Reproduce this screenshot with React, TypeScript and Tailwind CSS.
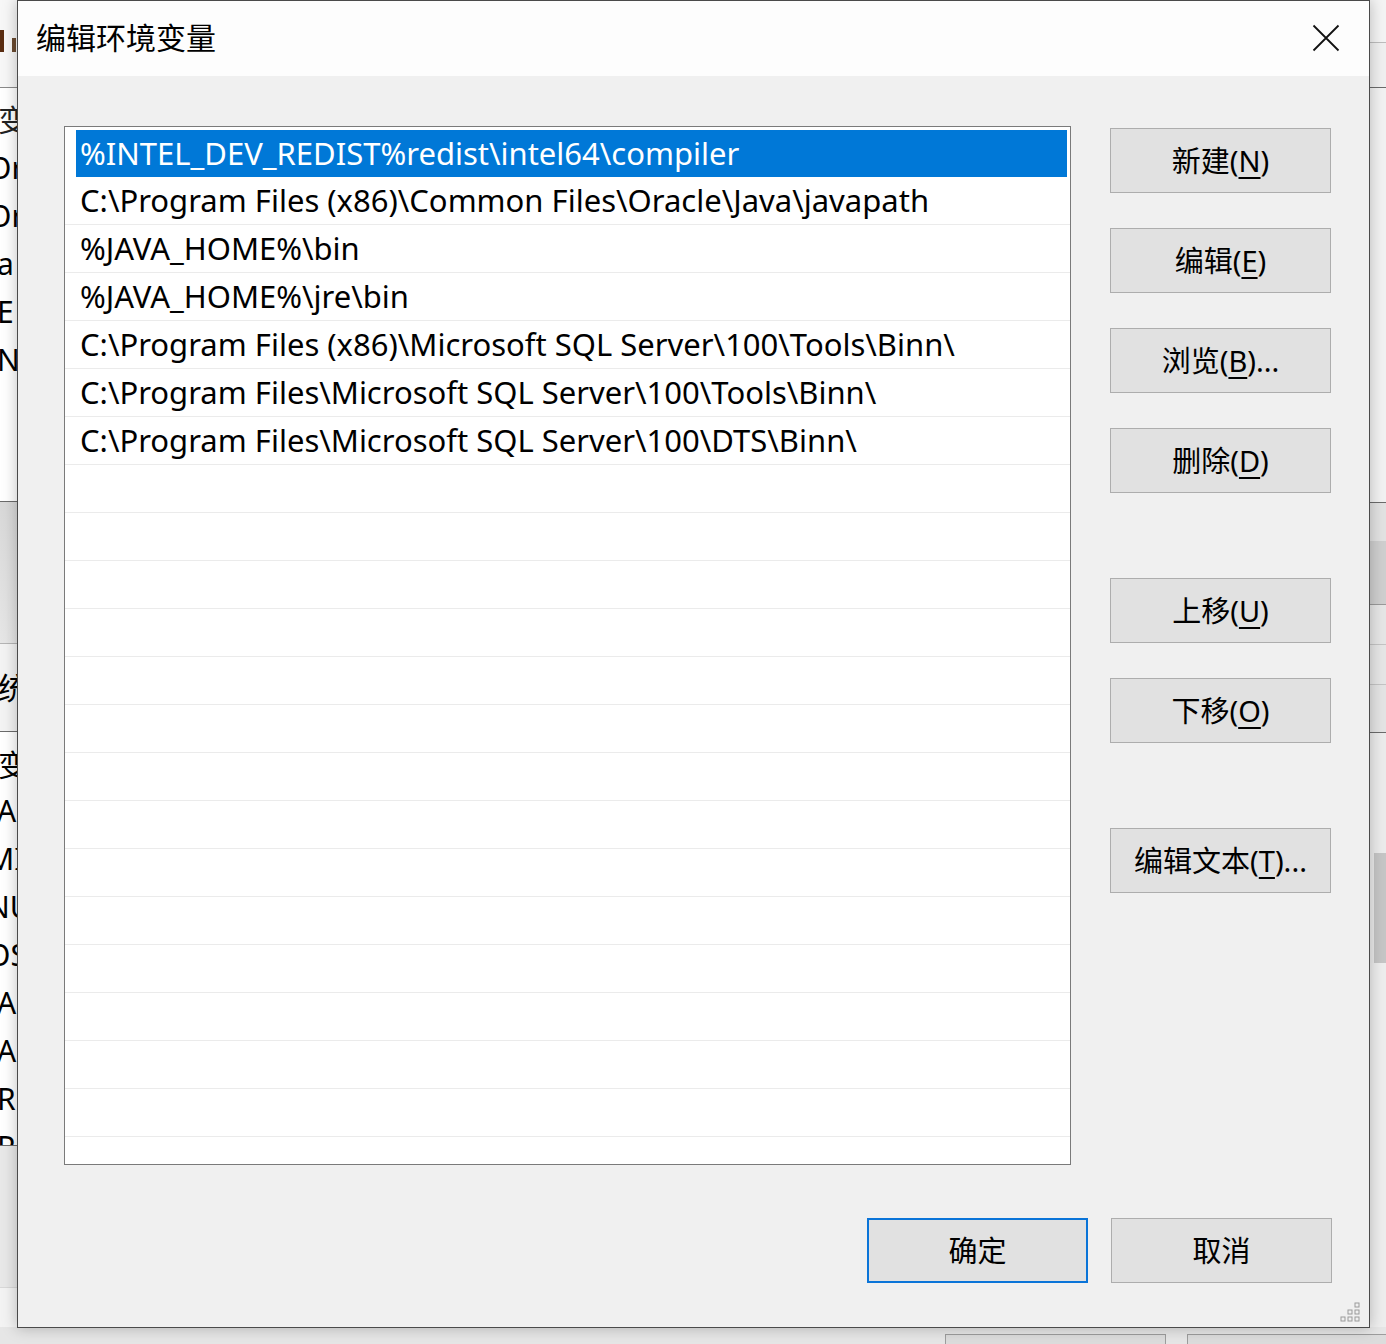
import React from "react";

const paths = [
  "%INTEL_DEV_REDIST%redist\\intel64\\compiler",
  "C:\\Program Files (x86)\\Common Files\\Oracle\\Java\\javapath",
  "%JAVA_HOME%\\bin",
  "%JAVA_HOME%\\jre\\bin",
  "C:\\Program Files (x86)\\Microsoft SQL Server\\100\\Tools\\Binn\\",
  "C:\\Program Files\\Microsoft SQL Server\\100\\Tools\\Binn\\",
  "C:\\Program Files\\Microsoft SQL Server\\100\\DTS\\Binn\\",
];

const rows = Array.from({ length: 22 }, (_, i) => paths[i] ?? "");

function Btn({
  label,
  mn,
  tail = "",
  primary = false,
}: {
  label: string;
  mn?: string;
  tail?: string;
  primary?: boolean;
}) {
  return (
    <div
      className={
        "w-[221px] h-[65px] flex items-center justify-center bg-[#e1e1e1] text-[29px] text-black " +
        (primary ? "border-2 border-[#0a74d8]" : "border border-[#adadad]")
      }
    >
      <span>
        {label}
        {mn ? (
          <>
            (<span className="underline underline-offset-[5px] decoration-[1.5px]">{mn}</span>)
          </>
        ) : null}
        {tail}
      </span>
    </div>
  );
}

export default function App() {
  const font = { fontFamily: '"Noto Sans", "Noto Sans CJK SC", sans-serif' };
  return (
    <div
      className="relative w-[1386px] h-[1344px] overflow-hidden bg-[#ececec]"
      style={font}
    >
      {/* background window - left edge */}
      <div className="absolute left-0 top-0 w-[40px] h-[1344px] bg-[#f3f3f3] overflow-hidden text-[30px] leading-none text-black flex flex-col">
        <div className="h-[88px] shrink-0 border-b border-[#8a8a8a] relative bg-[#f7f7f7]">
          <div className="absolute left-0 top-[30px] w-[4px] h-[22px] bg-[#5a2d12]" />
          <div className="absolute left-[12px] top-[38px] w-[4px] h-[14px] bg-[#6a4a30]" />
        </div>
        <div className="h-[414px] shrink-0 overflow-hidden border-b border-[#6b6b6b] bg-white flex flex-col">
          <div className="h-[56px] shrink-0 flex items-center pt-[8px] -ml-[2px] text-[#222]">变</div>
          {["Or", "Or", "a", "E", "N"].map((t, i) => (
            <div key={i} className={"h-[48px] shrink-0 flex items-center " + (t.length > 1 ? "-ml-[12px]" : "-ml-[3px]")}>
              {t}
            </div>
          ))}
        </div>
        <div className="h-[142px] shrink-0 bg-gradient-to-b from-[#d8d8d8] to-[#e6e6e6] border-b border-[#b5b5b5]" />
        <div className="h-[88px] shrink-0 flex items-center -ml-[2px] border-b border-[#6b6b6b]">统</div>
        <div className="bg-white flex flex-col h-[414px] shrink-0 overflow-hidden border-b border-[#6b6b6b]">
          <div className="h-[55px] shrink-0 flex items-center pt-[10px] -ml-[2px]">变</div>
          {["A", "MI", "NU", "OS", "A", "A", "R", "P"].map((t, i) => (
            <div key={i} className={"h-[48px] shrink-0 flex items-center " + (t.length > 1 ? "-ml-[13px]" : "-ml-[3px]")}>
              {t}
            </div>
          ))}
        </div>
        <div className="h-[142px] shrink-0 bg-[#e8e8e8] border-b border-[#d8d8d8]" />
      </div>

      {/* background window - right edge */}
      <div className="absolute left-[1369px] top-0 w-[17px] h-[1344px] bg-[#f0f0f0] flex flex-col">
        <div className="h-[43px] border-b border-[#bdbdbd] bg-[#f4f4f4]" />
        <div className="h-[45px] border-b border-[#6b6b6b] bg-[#f0f0f0]" />
        <div className="h-[415px] border-b border-[#6b6b6b] bg-[#f2f2f2]" />
        <div className="h-[38px] bg-[#e2e2e2]" />
        <div className="h-[64px] bg-[#cfcfcf] border-b border-[#9a9a9a]" />
        <div className="h-[40px] bg-[#e6e6e6] border-b border-[#c4c4c4]" />
        <div className="h-[40px] bg-[#e6e6e6] border-b border-[#c4c4c4]" />
        <div className="h-[48px] bg-[#e4e4e4] border-b border-[#6b6b6b]" />
        <div className="h-[120px] bg-[#ececec]" />
        <div className="h-[110px] flex justify-end bg-[#ececec]">
          <div className="w-[12px] h-full bg-[#c6c6c6]" />
        </div>
        <div className="flex-1 bg-[#eeeeee]" />
      </div>

      {/* background window - bottom edge */}
      <div className="absolute left-0 top-[1327px] w-[1386px] h-[17px] bg-[#e6e6e6] flex pt-[7px]">
        <div className="w-[945px]" />
        <div className="w-[221px] h-full bg-[#dcdcdc] border-t border-l border-r border-[#9d9d9d]" />
        <div className="w-[21px]" />
        <div className="flex-1 h-full bg-[#dcdcdc] border-t border-l border-[#9d9d9d]" />
      </div>

      {/* dialog */}
      <div className="absolute left-[17px] top-0 w-[1353px] h-[1328px] border border-[#4a4a4a] bg-[#f0f0f0] flex flex-col shadow-[0_0_14px_rgba(0,0,0,0.25)]">
        {/* title bar */}
        <div className="h-[75px] bg-[#fdfdfd] flex items-center justify-between pl-[18px] pr-[29px]">
          <div className="text-[30px] text-black leading-none -mt-[2px]">编辑环境变量</div>
          <svg width="28" height="28" viewBox="0 0 28 28" className="-mt-[2px]">
            <path d="M1.5 1.5 L26.5 26.5 M26.5 1.5 L1.5 26.5" stroke="#111" strokeWidth="1.8" fill="none" />
          </svg>
        </div>

        {/* body */}
        <div className="flex-1 flex flex-col pl-[46px] pr-[37px] pt-[50px]">
          <div className="flex gap-[39px]">
            {/* list */}
            <div className="w-[1007px] h-[1039px] border border-[#7a7a7a] bg-white pt-[2px] overflow-hidden">
              {rows.map((r, i) =>
                i === 0 ? (
                  <div key={i} className="h-[48px] pl-[11px] pr-[3px] pt-[1px]">
                    <div className="h-[47px] bg-[#0078d7] text-white text-[31px] leading-none flex items-center pl-[4px] whitespace-nowrap">
                      {r}
                    </div>
                  </div>
                ) : (
                  <div
                    key={i}
                    className="h-[48px] border-b border-[#ebebeb] text-[31px] leading-none text-black flex items-center pl-[15px] whitespace-nowrap"
                  >
                    {r}
                  </div>
                )
              )}
            </div>

            {/* right buttons */}
            <div className="flex flex-col pt-[2px]">
              <Btn label="新建" mn="N" />
              <div className="h-[35px]" />
              <Btn label="编辑" mn="E" />
              <div className="h-[35px]" />
              <Btn label="浏览" mn="B" tail="..." />
              <div className="h-[35px]" />
              <Btn label="删除" mn="D" />
              <div className="h-[85px]" />
              <Btn label="上移" mn="U" />
              <div className="h-[35px]" />
              <Btn label="下移" mn="O" />
              <div className="h-[85px]" />
              <Btn label="编辑文本" mn="T" tail="..." />
            </div>
          </div>

          {/* bottom buttons */}
          <div className="flex justify-end gap-[23px] mt-[53px]">
            <Btn label="确定" primary />
            <Btn label="取消" />
          </div>

          {/* resize grip */}
          <div className="flex-1 flex justify-end items-end -mr-[30px] pb-[3px]">
            <svg width="24" height="22" viewBox="0 0 24 22">
              {[
                [17, 1],
                [10, 8],
                [17, 8],
                [3, 15],
                [10, 15],
                [17, 15],
              ].map(([x, y], i) => (
                <rect key={i} x={x} y={y} width="4" height="4" fill="none" stroke="#9a9a9a" strokeWidth="1" />
              ))}
            </svg>
          </div>
        </div>
      </div>
    </div>
  );
}
